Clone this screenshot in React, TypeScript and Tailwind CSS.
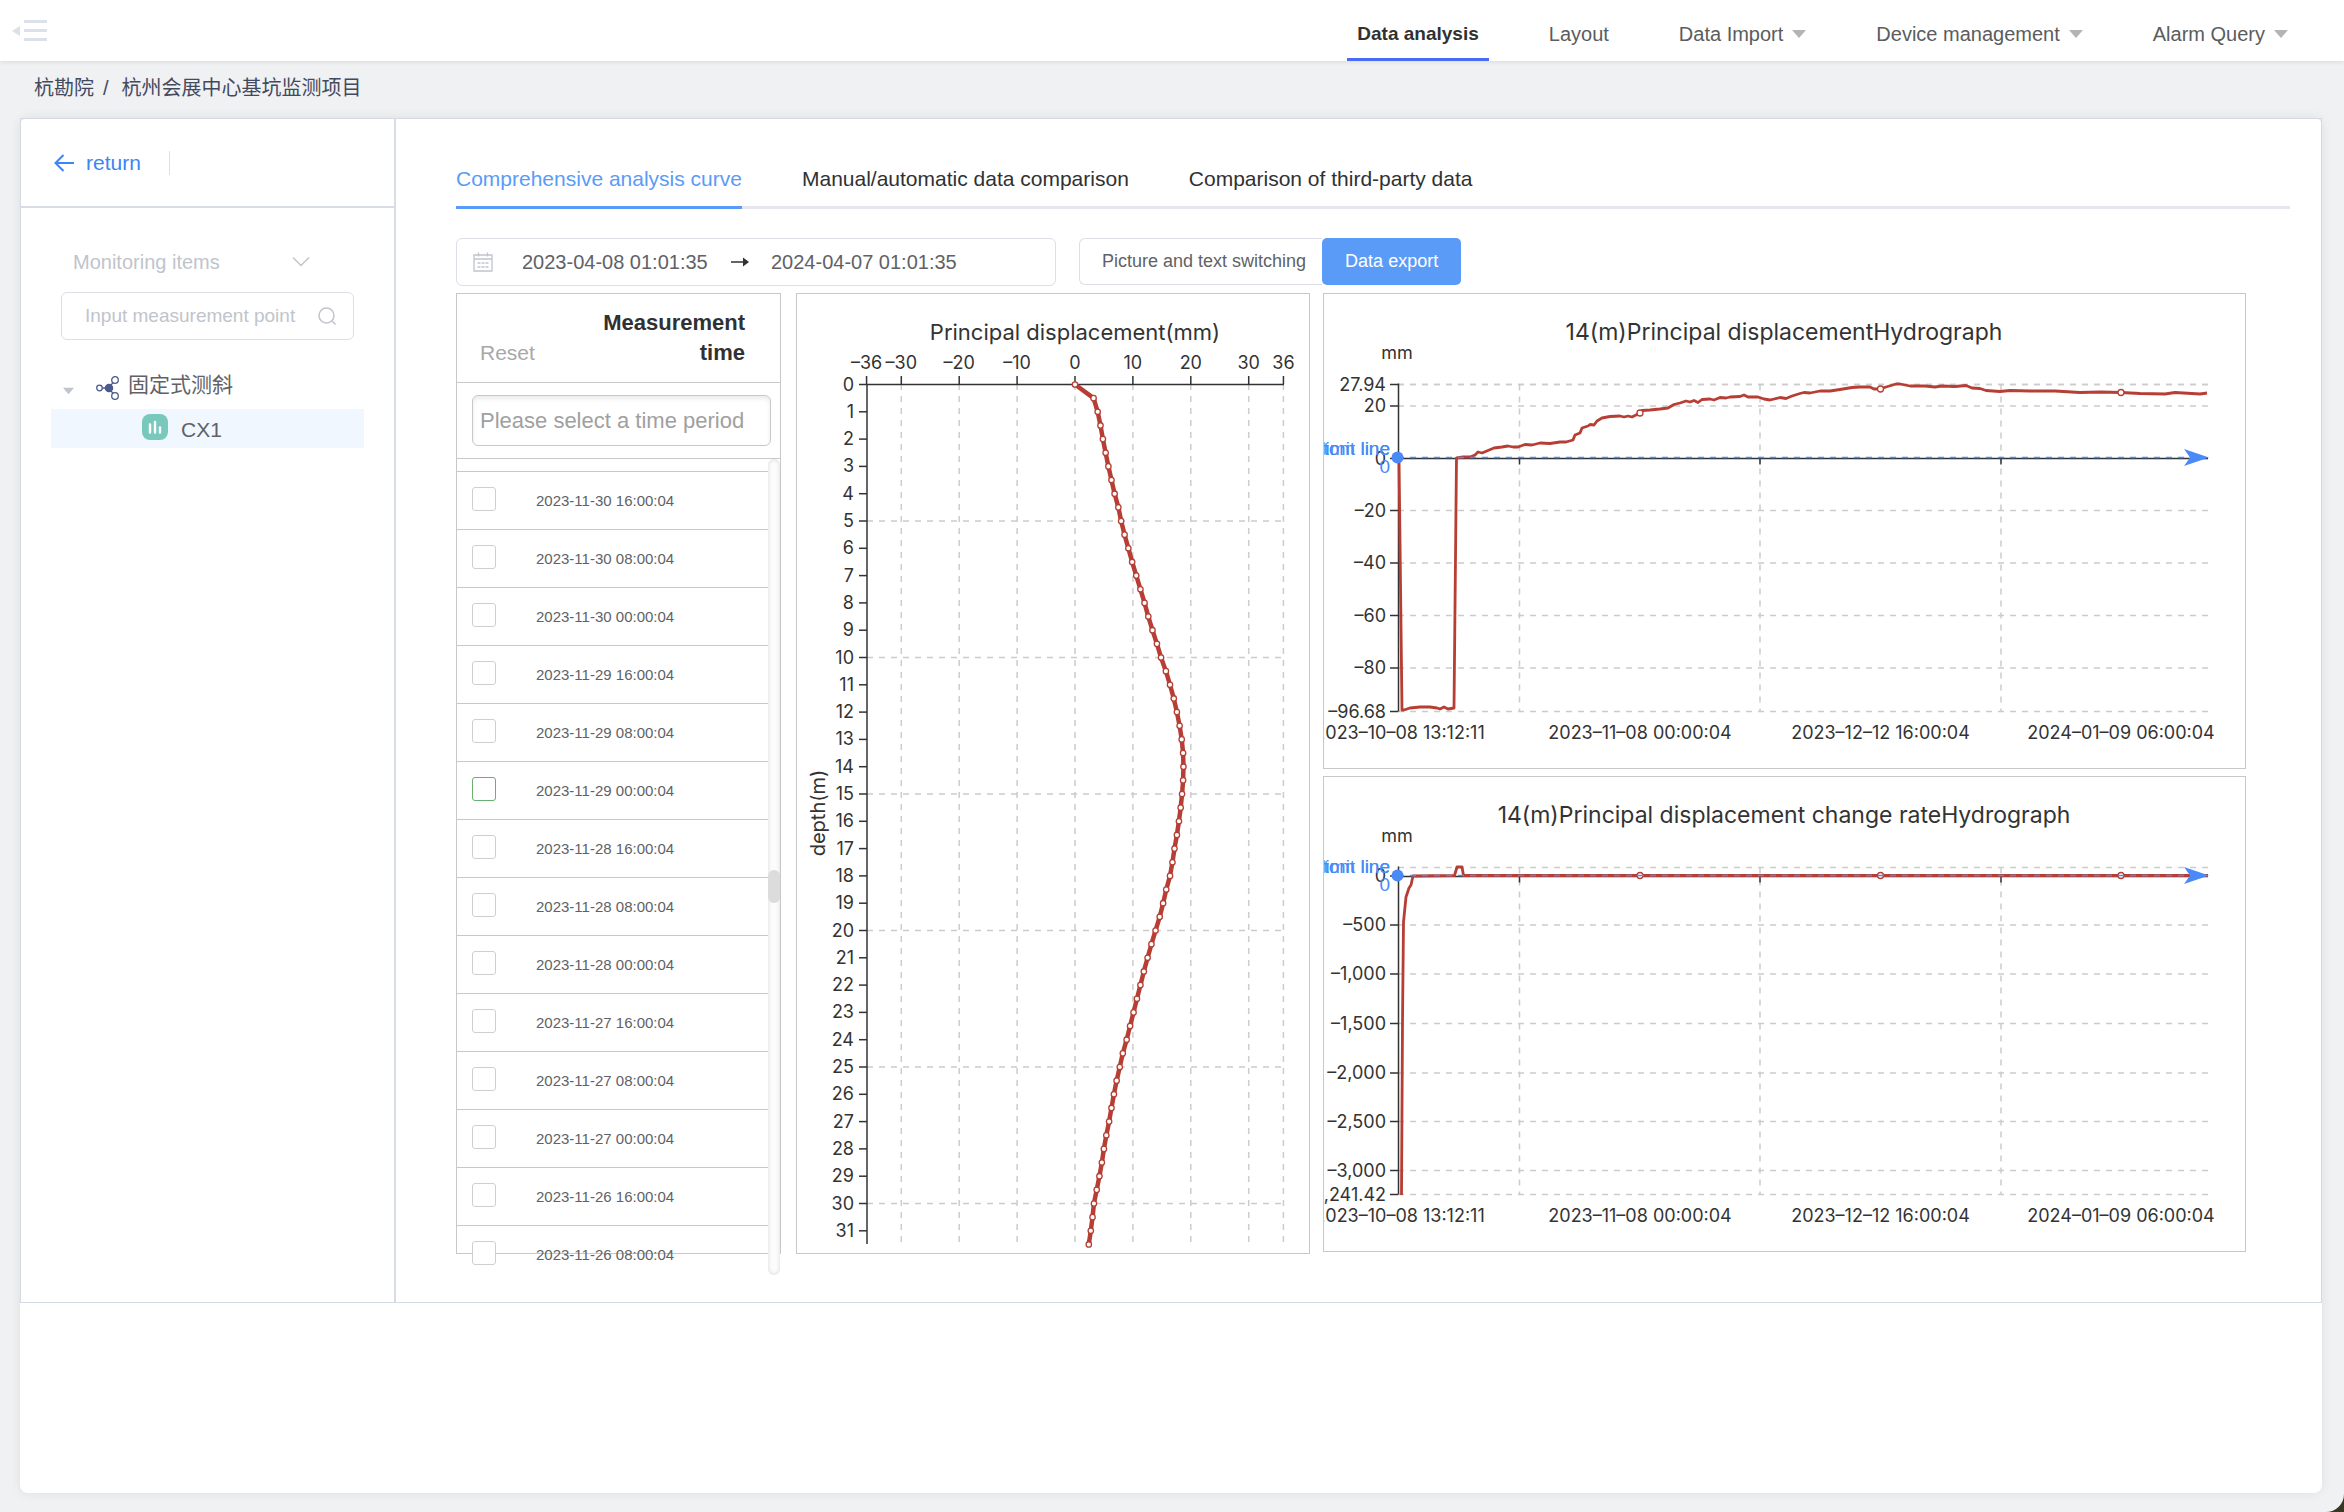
import React, { useState } from 'react';

const NAV_ITEMS = [
  { label: 'Data analysis', active: true, menu: false },
  { label: 'Layout', active: false, menu: false },
  { label: 'Data Import', active: false, menu: true },
  { label: 'Device management', active: false, menu: true },
  { label: 'Alarm Query', active: false, menu: true },
];

const TABS = [
  'Comprehensive analysis curve',
  'Manual/automatic data comparison',
  'Comparison of third-party data',
];

const TIMES = [
  '2023-11-30 16:00:04',
  '2023-11-30 08:00:04',
  '2023-11-30 00:00:04',
  '2023-11-29 16:00:04',
  '2023-11-29 08:00:04',
  '2023-11-29 00:00:04',
  '2023-11-28 16:00:04',
  '2023-11-28 08:00:04',
  '2023-11-28 00:00:04',
  '2023-11-27 16:00:04',
  '2023-11-27 08:00:04',
  '2023-11-27 00:00:04',
  '2023-11-26 16:00:04',
  '2023-11-26 08:00:04',
];

const HIGHLIGHTED_TIME = '2023-11-29 00:00:04';

// displacement in mm, one value every 0.5 m of depth
const DEPTH_PROFILE = [
  0, 3.21, 3.92, 4.4, 4.82, 5.29, 5.77, 6.3, 6.84, 7.49, 7.97, 8.56, 9.22, 9.87, 10.58, 11.3,
  12.01, 12.66, 13.38, 14.15, 14.86, 15.7, 16.41, 17.06, 17.6, 18.07, 18.43, 18.67, 18.73, 18.67,
  18.49, 18.25, 17.95, 17.6, 17.18, 16.83, 16.41, 15.76, 15.22, 14.63, 13.91, 13.2, 12.54, 11.89,
  11.3, 10.7, 10.11, 9.51, 8.92, 8.26, 7.73, 7.19, 6.72, 6.3, 5.89, 5.41, 4.99, 4.64, 4.22, 3.75,
  3.27, 3.03, 2.73, 2.38,
];

const DISPLACEMENT_LINE =
  '75,164 78,416 80,416 86,414 96,413 106,413 113,414 116,415 120,413 124,415 130,414 132.5,164 139,163 146,163 151,161 154,158 158,159 164,156.5 170,154 178,153 184,152 189,153 194,153 201,150.5 208,151 216,149 226,149.5 236,148 242,148 249,146 251,141 256,139 258,134 264,132 266,130.5 270,131 273,127 278,124 286,122.5 296,122 300,123 304,122 308,123 312,121 315.5,119 318,116.5 326,116 336,115 344,114 350,110.5 356,109 362,107 366,108 370,106.5 374,108.5 378,105.5 386,105 390,106 396,103.5 402,104 406,103 416,102.5 420,101 424,103 434,103 440,105 446,106 456,103.5 462,104.5 468,102 476,99.5 480,98.5 486,99 496,97 506,97 516,95.5 528,93.5 536,93 546,93 550,95 556,95 562,93 572,90 576,90 586,92 601,92 611,93 618,92 631,92.5 642,91.5 648,94 656,94.5 662,96.5 676,97.5 686,96.5 706,97 731,97 756,98.5 776,98 797,98.5 816,99.5 841,100 851,98.5 876,100 883,99';

const RATE_LINE =
  '77.5,418 78.5,245 79.5,145 82,120 85,111 87,108 89,99 130.5,98.5 133,90 138,90 139.5,98.5 884,98.5';

function CaretDown({ className }: { className?: string }) {
  return (
    <svg viewBox="0 0 14 8" className={className} fill="currentColor" aria-hidden="true">
      <path d="M0 0h14L7 8z" />
    </svg>
  );
}

function Header() {
  return (
    <header className="relative flex h-[61px] items-center justify-between bg-white pl-3 pr-[46px] shadow-[0_1px_4px_rgba(0,21,41,0.1)]">
      <button aria-label="Collapse menu" className="text-[#dbe1ea]">
        <svg width="36" height="24" viewBox="0 0 36 24" fill="currentColor">
          <path d="M8 7v10L0 12z" />
          <rect x="12" y="1" width="23" height="3" />
          <rect x="12" y="10" width="23" height="3" />
          <rect x="12" y="19" width="23" height="3" />
        </svg>
      </button>
      <nav className="flex h-full gap-[50px]">
        {NAV_ITEMS.map((item) => (
          <a
            key={item.label}
            href="#"
            className={
              item.active
                ? 'flex items-center border-b-[3px] border-[#4a6cf0] px-[10px] pt-[10px] text-[19px] font-bold text-[#303133]'
                : 'flex items-center border-b-[3px] border-transparent px-[10px] pt-[10px] text-[20px] text-[#5a5c60]'
            }
          >
            {item.label}
            {item.menu && <CaretDown className="ml-[9px] h-2 w-[14px] text-[#b4b4b4]" />}
          </a>
        ))}
      </nav>
    </header>
  );
}

function Sidebar() {
  return (
    <aside className="w-[375px] shrink-0 border-r-2 border-[#d8dce6]">
      <div className="flex h-[89px] items-center border-b-2 border-[#d8dce6] pl-[33px]">
        <a href="#" className="flex items-center text-[21px] text-[#3d84f5]">
          <svg width="20" height="18" viewBox="0 0 20 18" fill="none" stroke="currentColor" strokeWidth="2">
            <path d="M20 9H2M9.500 1L1.500 9l8 8" />
          </svg>
          <span className="ml-3">return</span>
        </a>
        <span className="ml-7 h-6 w-px bg-[#dcdfe6]" />
      </div>

      <div className="flex flex-col pt-[30px]">
        <div className="mx-[40px] flex h-12 items-center">
          <select
            aria-label="Monitoring items"
            className="w-full appearance-none bg-transparent pl-3 text-[20px] text-[#c0c4cc] outline-none"
          >
            <option>Monitoring items</option>
          </select>
          <svg width="18" height="12" viewBox="0 0 18 12" fill="none" stroke="#c0c4cc" strokeWidth="1.500" className="mr-[44px] shrink-0">
            <path d="M1 1.500l8 8 8-8" />
          </svg>
        </div>
        <label className="mx-[40px] mt-[6px] flex h-12 items-center rounded-md border border-[#dcdfe6] pl-[23px] pr-[17px]">
          <input
            type="text"
            aria-label="Input measurement point"
            placeholder="Input measurement point"
            className="min-w-0 flex-1 text-[19px] outline-none placeholder:text-[#c0c4cc]"
          />
          <svg width="18" height="18" viewBox="0 0 18 18" fill="none" stroke="#c0c4cc" strokeWidth="1.500">
            <circle cx="8.500" cy="8.500" r="7.500" />
            <path d="M14 14l3.500 3.500" />
          </svg>
        </label>

        <ul className="mx-[30px] mt-[26px] text-[21px] text-[#606266]">
          <li className="flex h-[43px] items-center pl-3">
            <CaretDown className="mt-[6px] h-2 w-[11px] text-[#c0c4cc]" />
            <svg width="24" height="24" viewBox="0 0 24 24" className="ml-[22px]" fill="none" stroke="#4a5a8c" strokeWidth="1.300">
              <circle cx="13" cy="12" r="3.600" fill="#4a5a8c" />
              <circle cx="3.500" cy="12" r="2.800" />
              <circle cx="19" cy="4" r="3.300" />
              <circle cx="19" cy="20" r="3.300" />
              <path d="M6.500 12h3M15 9l2.200-2.600M15 15l2.200 2.600" />
            </svg>
            <span className="mb-[6px] ml-2">固定式测斜</span>
          </li>
          <li className="flex h-[39px] items-center bg-[#f0f7ff] pl-[91px]">
            <svg width="26" height="26" viewBox="0 0 26 26" className="mb-1">
              <rect width="26" height="26" rx="8" fill="#78c9bc" />
              <path d="M8 10.500v8M13 8v10.500M18 13.500v5" stroke="#fff" strokeWidth="2.400" strokeLinecap="round" />
            </svg>
            <span className="ml-[13px] mt-[2px]">CX1</span>
          </li>
        </ul>
      </div>
    </aside>
  );
}

function TimeList() {
  const [checked, setChecked] = useState<string[]>([]);

  const toggle = (time: string) => {
    setChecked((prev) => (prev.includes(time) ? prev.filter((t) => t !== time) : [...prev, time]));
  };

  return (
    <section className="h-[961px] w-[325px] shrink-0 border border-[#c8c8c8]">
      <div className="flex h-[89px] items-end justify-between border-b border-[#c8c8c8] pb-[14px] pl-[23px] pr-[35px]">
        <button className="text-[21px] leading-[30px] text-[#a8a8a8]" onClick={() => setChecked([])}>
          Reset
        </button>
        <h2 className="w-[150px] text-right text-[22px] font-bold leading-[30px] text-[#303133]">Measurement time</h2>
      </div>
      <div className="flex h-[76px] items-center border-b border-[#c8c8c8] pl-[15px] pr-[9px]">
        <input
          type="text"
          aria-label="Time period"
          placeholder="Please select a time period"
          className="h-[51px] w-full rounded-md border border-[#c8c8c8] pl-[7px] text-[22px] shadow-[inset_0_3px_4px_rgba(0,0,0,0.08)] outline-none placeholder:text-[#a0a0a0]"
        />
      </div>
      <div className="flex h-[816px] overflow-hidden">
        <ul className="flex-1 pt-3">
          {TIMES.map((time) => (
            <li key={time} className="h-[58px] border-t border-[#c8c8c8]">
              <label className="flex h-full items-center pl-[15px] text-[15px] text-[#606266]">
                <input
                  type="checkbox"
                  checked={checked.includes(time)}
                  onChange={() => toggle(time)}
                  className={
                    time === HIGHLIGHTED_TIME
                      ? 'mb-1 size-6 appearance-none rounded-[3px] border border-[#67b070] bg-white checked:bg-[#67b070]'
                      : 'mb-1 size-6 appearance-none rounded-[3px] border border-[#cfcfcf] bg-white checked:bg-[#67b070]'
                  }
                />
                <span className="ml-10 mt-[2px]">{time}</span>
              </label>
            </li>
          ))}
        </ul>
        <div className="w-3 rounded-md bg-[#fcfcfc] pt-[411px] shadow-[inset_0_0_4px_rgba(0,0,0,0.15)]">
          <div className="h-[33px] rounded-md bg-[#dcdcdc]" />
        </div>
      </div>
    </section>
  );
}

function DepthChart() {
  const x = (v: number) => 278 + v * 5.79;
  const y = (d: number) => 90.5 + d * 27.3;
  const xTicks = [-36, -30, -20, -10, 0, 10, 20, 30, 36];
  const depths = Array.from({ length: 32 }, (_, i) => i);
  const points = DEPTH_PROFILE.map((v, i) => ({ cx: x(v), cy: y(i / 2) }));

  return (
    <section className="w-[514px] shrink-0 border border-[#c8c8c8]">
      <svg viewBox="0 0 512 959" className="block h-auto w-full font-[Inter,sans-serif] text-[18px]" fill="#333">
        <text x="278" y="46" textAnchor="middle" className="text-[22px]">
          Principal displacement(mm)
        </text>
        <text transform="translate(28 519) rotate(-90)" textAnchor="middle" className="text-[20px]">
          depth(m)
        </text>

        <g stroke="#ccc" strokeWidth="1.500" strokeDasharray="6 6">
          {xTicks.slice(1).map((v) => (
            <line key={v} x1={x(v)} x2={x(v)} y1="90" y2="950" />
          ))}
          {[5, 10, 15, 20, 25, 30].map((d) => (
            <line key={d} x1="70" x2="487" y1={y(d)} y2={y(d)} />
          ))}
        </g>

        <g stroke="#333" strokeWidth="1.500">
          <line x1="69.500" x2="487" y1="90.500" y2="90.500" />
          <line x1="70" x2="70" y1="90" y2="950" />
          {xTicks.map((v) => (
            <line key={v} x1={x(v)} x2={x(v)} y1="82" y2="90" />
          ))}
          {depths.map((d) => (
            <line key={d} x1="62" x2="70" y1={y(d)} y2={y(d)} />
          ))}
        </g>

        {xTicks.map((v) => (
          <text key={v} x={x(v)} y="75" textAnchor="middle">
            {String(v).replace('-', '–')}
          </text>
        ))}
        {depths.map((d) => (
          <text key={d} x="57" y={y(d) + 6} textAnchor="end">
            {d}
          </text>
        ))}

        <polyline
          points={points.map((p) => `${p.cx},${p.cy}`).join(' ')}
          fill="none"
          stroke="#b63e34"
          strokeWidth="4.500"
          strokeLinejoin="round"
        />
        {points.map((p) => (
          <circle key={p.cy} cx={p.cx} cy={p.cy} r="2.700" fill="#fff" stroke="#b63e34" strokeWidth="1.300" />
        ))}
      </svg>
    </section>
  );
}

type AxisTick = { label: string; y: number };

type HydrographProps = {
  title: string;
  ticks: AxisTick[];
  top: number;
  bottom: number;
  zero: number;
  line: string;
  markers: number[];
};

const DATE_LABELS = [
  { x: 75.5, label: '2023–10–08 13:12:11' },
  { x: 316, label: '2023–11–08 00:00:04' },
  { x: 556.5, label: '2023–12–12 16:00:04' },
  { x: 797, label: '2024–01–09 06:00:04' },
];

function Hydrograph({ title, ticks, top, bottom, zero, line, markers }: HydrographProps) {
  const dividers = [195.5, 436, 677];

  return (
    <section className="border border-[#c8c8c8]">
      <svg viewBox="0 0 921 474" className="block h-auto w-full font-[Inter,sans-serif] text-[18px]" fill="#333">
        <text x="460" y="46" textAnchor="middle" className="text-[23px]">
          {title}
        </text>
        <text x="73" y="65" textAnchor="middle">
          mm
        </text>

        <g stroke="#ccc" strokeWidth="1.500" strokeDasharray="6 6">
          <line x1="74" x2="884" y1={top} y2={top} />
          {ticks.map((t) => (
            <line key={t.label} x1="74" x2="884" y1={t.y} y2={t.y} />
          ))}
          {dividers.map((d) => (
            <line key={d} x1={d} x2={d} y1={top} y2={bottom} />
          ))}
        </g>

        <g stroke="#333" strokeWidth="1.500">
          <line x1="74.500" x2="74.500" y1={top - 1} y2={bottom} />
          <line x1="74.500" x2="884" y1={zero + 1} y2={zero + 1} />
          {ticks.map((t) => (
            <line key={t.label} x1="66" x2="74" y1={t.y} y2={t.y} />
          ))}
          {dividers.map((d) => (
            <line key={d} x1={d} x2={d} y1={zero} y2={zero + 7} />
          ))}
        </g>

        {ticks.map((t) => (
          <text key={t.label} x="62" y={t.y + 6} textAnchor="end">
            {t.label}
          </text>
        ))}
        {DATE_LABELS.map((d) => (
          <text key={d.label} x={d.x} y={bottom + 27} textAnchor="middle">
            {d.label}
          </text>
        ))}

        <polyline points={line} fill="none" stroke="#b63e34" strokeWidth="2.800" strokeLinejoin="round" />
        {markers.map((my, i) => (
          <circle key={i} cx={DATE_LABELS[i + 1].x} cy={my} r="3" fill="#fff" stroke="#b63e34" strokeWidth="1.300" />
        ))}

        {/* limit lines share the zero level, so their labels overlap */}
        <g fill="#4a8af8" className="font-['Liberation_Sans',sans-serif] text-[19px]">
          <line x1="74" x2="880" y1={zero} y2={zero} stroke="#4a8af8" strokeWidth="1.500" strokeDasharray="6 6" />
          <circle cx="73.500" cy={zero} r="6" />
          <path d={`M885 ${zero}L860 ${zero - 8.5}L866 ${zero}L860 ${zero + 8.5}Z`} />
          <text x="66" y={zero - 3} textAnchor="end">
            limit line
          </text>
          <text x="66" y={zero - 3} textAnchor="end">
            bottom line
          </text>
          <text x="66" y={zero + 15} textAnchor="end">
            0
          </text>
        </g>
      </svg>
    </section>
  );
}

function Toolbar() {
  return (
    <div className="mt-[29px] flex">
      <div className="flex h-12 w-[600px] items-center rounded-md border border-[#dcdfe6] pl-4 text-[20px] text-[#606266]">
        <svg width="20" height="20" viewBox="0 0 20 20" fill="none" stroke="#c0c4cc" strokeWidth="1.300">
          <path d="M1 3h18v16H1zM1 7h18M5.500 0.500v4M14.500 0.500v4" />
          <path d="M4.500 11h3M8.500 11h3M12.500 11h3M4.500 15h3M8.500 15h3M12.500 15h3" />
        </svg>
        <input
          type="text"
          aria-label="Start time"
          defaultValue="2023-04-08 01:01:35"
          className="ml-[29px] w-[192px] outline-none"
        />
        <svg width="18" height="12" viewBox="0 0 18 12" className="ml-[17px]">
          <path d="M0 6h13" stroke="#303133" strokeWidth="1.500" />
          <path d="M12 1.500L18 6l-6 4.500z" fill="#303133" />
        </svg>
        <input
          type="text"
          aria-label="End time"
          defaultValue="2024-04-07 01:01:35"
          className="ml-[22px] w-[192px] outline-none"
        />
      </div>
      <button className="ml-[23px] h-[47px] rounded-l-md border border-r-0 border-[#dcdfe6] pl-[22px] pr-4 text-[18px] text-[#606266]">
        Picture and text switching
      </button>
      <button className="h-[47px] rounded-[5px] bg-[#5b9bf8] px-[23px] text-[18px] text-white">Data export</button>
    </div>
  );
}

function App() {
  const [activeTab, setActiveTab] = useState(TABS[0]);

  return (
    <div className="bg-[#3b3624] font-['Liberation_Sans','Noto_Sans_CJK_SC',sans-serif]">
      <div className="flex min-h-screen flex-col rounded-br-[18px] bg-[#f0f1f3]">
        <Header />
        <div className="flex gap-[9px] pb-4 pl-[34px] pt-[13px] text-[20px] leading-7 text-[#434a60]">
          <a href="#">杭勘院</a>
          <span className="mr-1">/</span>
          <span>杭州会展中心基坑监测项目</span>
        </div>

        <main className="mb-[19px] ml-5 mr-[22px] flex-1 rounded-lg bg-white shadow-[0_0_12px_rgba(0,0,0,0.08)]">
          <div className="flex border border-[#d4dae4]">
            <Sidebar />
            <div className="min-w-0 flex-1 pb-12 pl-[60px] pr-[31px] pt-[45px]">
              <div role="tablist" className="flex gap-[60px] border-b-[3px] border-[#e4e7ed]">
                {TABS.map((tab) => (
                  <button
                    key={tab}
                    role="tab"
                    aria-selected={tab === activeTab}
                    onClick={() => setActiveTab(tab)}
                    className={
                      tab === activeTab
                        ? '-mb-[3px] border-b-[3px] border-[#5b9bf8] pb-3 text-[21px] leading-[30px] text-[#5b9bf8]'
                        : '-mb-[3px] border-b-[3px] border-transparent pb-3 text-[21px] leading-[30px] text-[#303133]'
                    }
                  >
                    {tab}
                  </button>
                ))}
              </div>

              <Toolbar />

              <div className="mt-[7px] flex items-start pr-[44px]">
                <TimeList />
                <div className="ml-[15px] flex min-w-0 flex-1 gap-[13px]">
                  <DepthChart />
                  <div className="flex min-w-0 flex-1 flex-col gap-[7px]">
                    <Hydrograph
                      title="14(m)Principal displacementHydrograph"
                      top={90.5}
                      bottom={417.5}
                      zero={163.5}
                      line={DISPLACEMENT_LINE}
                      markers={[119, 95, 98.5]}
                      ticks={[
                        { label: '27.94', y: 90.5 },
                        { label: '20', y: 112 },
                        { label: '0', y: 164.5 },
                        { label: '–20', y: 216.5 },
                        { label: '–40', y: 269 },
                        { label: '–60', y: 321.5 },
                        { label: '–80', y: 374 },
                        { label: '–96.68', y: 417.5 },
                      ]}
                    />
                    <Hydrograph
                      title="14(m)Principal displacement change rateHydrograph"
                      top={90.5}
                      bottom={417.5}
                      zero={98.5}
                      line={RATE_LINE}
                      markers={[98.5, 98.5, 98.5]}
                      ticks={[
                        { label: '0', y: 99 },
                        { label: '–500', y: 148 },
                        { label: '–1,000', y: 197 },
                        { label: '–1,500', y: 246.5 },
                        { label: '–2,000', y: 296 },
                        { label: '–2,500', y: 344.5 },
                        { label: '–3,000', y: 393.5 },
                        { label: '–3,241.42', y: 417.5 },
                      ]}
                    />
                  </div>
                </div>
              </div>
            </div>
          </div>
        </main>
      </div>
    </div>
  );
}

export default App;
